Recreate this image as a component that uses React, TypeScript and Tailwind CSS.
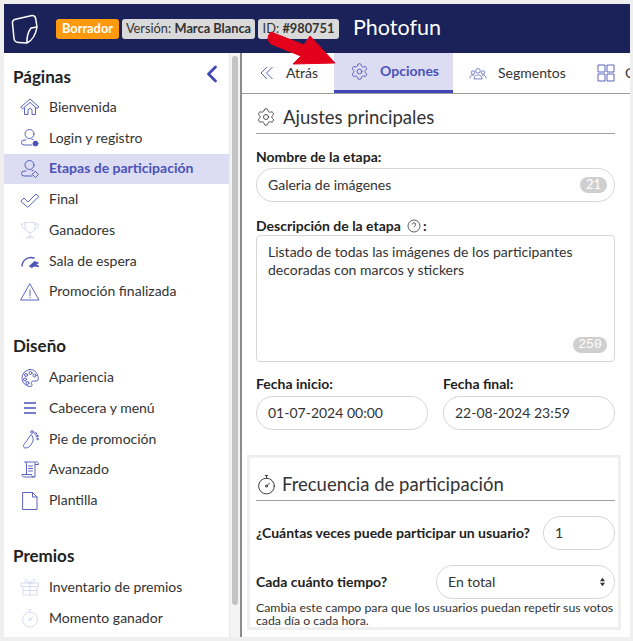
import React from 'react';
import { Settings } from 'lucide-react';

const stroke = '#4a52b8';

const Ico = ({ children, className = '', color = stroke }: { children: React.ReactNode; className?: string; color?: string }) => (
  <svg viewBox="0 0 20 20" fill="none" stroke={color} strokeWidth="0.9" strokeLinecap="round" strokeLinejoin="round" className={className}>
    {children}
  </svg>
);

const Stopwatch = ({ className = '', color = stroke }: { className?: string; color?: string }) => (
  <Ico className={className} color={color}>
    <circle cx="10" cy="11.500" r="7.500" />
    <path d="M8.800 1.500h2.400M10 1.500v2.500M10 11.500l2.800-2.800" />
    <circle cx="10" cy="11.500" r="1" />
  </Ico>
);

const items1: { label: string; icon: React.ReactNode; active?: boolean }[] = [
  { label: 'Bienvenida', icon: <Ico className="w-5 h-5"><path d="M1 10 10 2l9 8-2 1.500L10 5.500 3 11.500zM4.500 11v6.500h3.500v-4a2 2 0 0 1 4 0v4h3.500V11" /></Ico> },
  { label: 'Login y registro', icon: <Ico className="w-5 h-5"><circle cx="9.500" cy="6" r="4.500" /><path d="M12 17H4a2.500 2.500 0 0 1 0-5h2M13 11.500h-1" /><circle cx="15.500" cy="15.500" r="2.500" fill={stroke} /></Ico> },
  { label: 'Etapas de participación', active: true, icon: <Ico className="w-5 h-5"><circle cx="9.500" cy="6" r="4.500" /><path d="M12 17H4a2.500 2.500 0 0 1 0-5h2M13 11.500h-1" /><path d="M15.500 12.500l3 3-3 3-3-3z" /></Ico> },
  { label: 'Final', icon: <Ico className="w-5 h-5"><path d="M1 11l3-3 4 4 8-8 3 2.500L8 17z" /></Ico> },
  { label: 'Ganadores', icon: <Ico className="w-5 h-5" color="#d5d7ef"><path d="M5 2.500h10v5a5 5 0 0 1-10 0zM5 4H1.500c0 3 1.500 5 4 5.500M15 4h3.500c0 3-1.500 5-4 5.500M10 12.500v4M6 18h8M7.500 16.500h5" /></Ico> },
  { label: 'Sala de espera', icon: <Ico className="w-5 h-5"><path d="M2 15A9 9 0 0 1 14 7" strokeWidth="1.400" /><path d="M9.500 15l5-4.500 4 1.500-3 1 3.500 2.500-5-.5-2 1.500z" fill={stroke} /></Ico> },
  { label: 'Promoción finalizada', icon: <Ico className="w-5 h-5"><path d="M10 2 19 18H1zM10 8v5.500M10 15.200v.6" /></Ico> },
];

const items2: { label: string; icon: React.ReactNode }[] = [
  { label: 'Apariencia', icon: <Ico className="w-5 h-5"><path d="M10 1.500a8.500 8.500 0 1 0 1 17c1.500-.5 1-2 .5-3-.5-1.500.5-2.500 2-2.500h3.500c1.500-1 1.500-3 1-4.500C17 4 14 1.500 10 1.500z" /><circle cx="6" cy="7" r="1.500" /><circle cx="10.500" cy="5" r="1.500" /><circle cx="14.500" cy="7.500" r="1.500" /><circle cx="5" cy="11.500" r="1.500" /><circle cx="7.500" cy="15" r="1.500" /></Ico> },
  { label: 'Cabecera y menú', icon: <Ico className="w-5 h-5"><path d="M4 5h12M4 10h12M4 15h12" strokeWidth="1.700" strokeLinecap="butt" /></Ico> },
  { label: 'Pie de promoción', icon: <Ico className="w-5 h-5"><path d="M11 6c-2 1-3 5-6 8-2 2-2 5 .5 5 3 0 5-2 6.500-5 1.500-2.500 2-5-.5-8z" /><circle cx="12" cy="3" r="1.300" /><circle cx="15.500" cy="4.500" r="1" /><circle cx="17" cy="7" r="1" /><circle cx="17.500" cy="10" r=".8" /></Ico> },
  { label: 'Avanzado', icon: <Ico className="w-5 h-5"><path d="M5 2h11.500c1.500 0 2 1 2 2.500h-3M5 2c1 0 1.500.5 1.500 1.500V14M15 3v14H4.500C3 17 2 16 2 14.500h9.500c0 1.500 1 2.500 2 2.500M8.500 6h4M8.500 8.500h4M8.500 11h4" /></Ico> },
  { label: 'Plantilla', icon: <Ico className="w-5 h-5"><path d="M3 1.500h9.500L17 6v12.500H3zM12.500 1.500V6H17" /></Ico> },
];

const items3: { label: string; icon: React.ReactNode }[] = [
  { label: 'Inventario de premios', icon: <Ico className="w-5 h-5" color="#d5d7ef"><path d="M1.500 6h17v3.500h-17zM3 9.500V18h14V9.500M10 6v12M3 13.500h14M10 6C8 2 5 1.500 5 3.500S8 6 10 6zM10 6c2-4 5-4.500 5-2.500S12 6 10 6z" /></Ico> },
  { label: 'Momento ganador', icon: <Stopwatch className="w-5 h-5" color="#d5d7ef" /> },
];

const Row = ({ label, icon, active }: { label: string; icon: React.ReactNode; active?: boolean }) => (
  <div className={`flex items-center h-[30.75px] pl-4 ${active ? 'bg-[#dcdcf3]' : ''}`}>
    <span className="w-[29px] shrink-0">{icon}</span>
    <span className={`text-[14px] mb-[2px] ${active ? 'font-bold text-[#4a52b8]' : 'text-[#333]'}`}>{label}</span>
  </div>
);

const SectionTitle = ({ children }: { children: React.ReactNode }) => (
  <h3 className="text-[17px] font-bold text-[#222] leading-5 pl-[9px]">{children}</h3>
);

const Label = ({ children }: { children: React.ReactNode }) => (
  <label className="block text-[14px] font-bold text-[#222] leading-4">{children}</label>
);

const Pill = ({ children, className = '' }: { children: React.ReactNode; className?: string }) => (
  <div className={`h-[34px] rounded-full border border-[#d6d6d6] flex items-center pl-[11px] pr-3 pb-[2px] text-[14px] text-[#333] ${className}`}>{children}</div>
);

const Counter = ({ children, className = '' }: { children: React.ReactNode; className?: string }) => (
  <span className={`h-4 rounded-full bg-[#cfcfcf] text-white text-[13px] flex items-center justify-center ${className}`}>{children}</span>
);

export default function App() {
  return (
    <div className="relative w-[633px] h-[641px] overflow-hidden bg-[#efefef] pt-1 pl-1 pr-[3px] pb-[4px] font-['Lato',sans-serif]">
      <div className="h-full flex flex-col bg-white">
        {/* Top bar */}
        <header className="h-[49px] shrink-0 bg-[#1a2259] flex items-center pl-[6px]">
          <svg viewBox="0 0 30 30" fill="none" stroke="#fff" strokeWidth="1.500" strokeLinejoin="round" className="w-[30px] h-[30px] shrink-0">
            <path d="M2.500 9.500Q2 6 5.500 5.200L21 1.700Q25 1 25.700 4.500L27 13Q25 25 17 29L8.500 28.500Q4.500 28.300 4 24.500z" />
            <path d="M27 13 21 14Q16.500 20 17 29" />
          </svg>
          <div className="flex items-center gap-[3px] ml-4 text-[12.800px] leading-5">
            <span className="h-5 w-[63px] pb-[2px] flex items-center justify-center rounded-[3px] bg-[#ff9a0e] text-white font-bold">Borrador</span>
            <span className="h-5 w-[133px] pb-[2px] flex items-center justify-center rounded-[3px] bg-[#d9d9d9] text-[#333]">Versión:&nbsp;<b>Marca Blanca</b></span>
            <span className="h-5 w-[81px] pb-[2px] flex items-center justify-center rounded-[3px] bg-[#d9d9d9] text-[#333]">ID:&nbsp;<b>#980751</b></span>
          </div>
          <span className="ml-[14px] mb-[2px] text-[21.500px] text-white">Photofun</span>
        </header>

        <div className="flex-1 flex min-h-0">
          {/* Sidebar */}
          <aside className="w-[225px] shrink-0 overflow-hidden pt-[14px]">
            <div className="flex items-center justify-between pr-[11px]">
              <SectionTitle>Páginas</SectionTitle>
              <svg viewBox="0 0 12 18" fill="none" stroke="#3f48b5" strokeWidth="2.800" strokeLinecap="round" strokeLinejoin="round" className="w-3 h-[18px] -mt-[7px]"><path d="M9.500 2 2.500 9l7 7" /></svg>
            </div>
            <div className="mt-[5px]">{items1.map((i) => <Row key={i.label} {...i} />)}</div>
            <div className="mt-[29px]"><SectionTitle>Diseño</SectionTitle></div>
            <div className="mt-[6px]">{items2.map((i) => <Row key={i.label} {...i} />)}</div>
            <div className="mt-[30px]"><SectionTitle>Premios</SectionTitle></div>
            <div className="mt-[6px]">{items3.map((i) => <Row key={i.label} {...i} />)}</div>
          </aside>

          {/* Sidebar scrollbar */}
          <div className="w-[11px] shrink-0 bg-[#f4f4f4] border-l border-[#e8e8e8] pl-[2px] pt-[3px]">
            <div className="w-[6px] h-[549px] rounded-full bg-[#c4c4c4]" />
          </div>
          <div className="w-[2px] shrink-0 bg-[#8c8c8c]" />

          {/* Main panel */}
          <main className="flex-1 min-w-0 flex flex-col">
            <nav className="h-[41px] shrink-0 flex border-b border-[#9a9a9a] overflow-hidden text-[14px] text-[#333]">
              <div className="w-[92px] shrink-0 flex items-center pl-[18px]">
                <svg viewBox="0 0 14 14" fill="none" stroke="#4a52b8" strokeWidth="0.9" className="w-[14px] h-[14px] mr-[12px]"><path d="M7 1 1 7l6 6M12.500 1l-6 6 6 6" /></svg>
                <span className="mb-[2px]">Atrás</span>
              </div>
              <div className="w-[119px] shrink-0 flex items-center pl-4 bg-[#dcdcf3] border-b-[3px] border-[#3f48b5] font-bold text-[#4a52b8]">
                <Settings size={19} strokeWidth={1.100} color={stroke} className="mr-[11px]" />
                <span className="mb-[2px]">Opciones</span>
              </div>
              <div className="w-[134px] shrink-0 flex items-center pl-4 text-[#333]">
                <svg viewBox="0 0 20 14" fill="none" stroke="#4a52b8" strokeWidth="0.8" className="w-[18px] h-[13px] mr-[11px]"><circle cx="10" cy="4" r="2.500" /><circle cx="4.500" cy="6" r="2" /><circle cx="15.500" cy="6" r="2" /><path d="M5.500 13c0-6 9-6 9 0zM1 12.500c0-3 2-4.500 4.500-3.500M19 12.500c0-3-2-4.500-4.500-3.500" /></svg>
                <span className="mb-[2px]">Segmentos</span>
              </div>
              <div className="shrink-0 flex items-center pl-[10px]">
                <svg viewBox="0 0 18 18" fill="none" stroke="#4a52b8" strokeWidth="0.9" className="w-[18px] h-[18px] mr-[10px]"><path d="M1 1h7v7H1zM10 1h7v7h-7zM1 10h7v7H1zM10 10h7v7h-7z" /></svg>
                <span className="mb-[2px]">Contenido</span>
              </div>
            </nav>

            <div className="flex-1 min-h-0 overflow-hidden">
              <div className="pl-[14px] pr-[15px]">
                <h2 className="h-[39px] mt-[1px] flex items-end pb-[4px] border-b border-[#a0a0a0] text-[18.500px] leading-6 text-[#333]">
                  <Settings size={20} strokeWidth={1} color="#333" className="mr-[7px] mb-[2px]" />
                  Ajustes principales
                </h2>
                <div className="mt-[15px]"><Label>Nombre de la etapa:</Label></div>
                <Pill className="mt-[3px] justify-between pr-[7px]">
                  <span>Galeria de imágenes</span>
                  <Counter className="w-[27px] mt-[2px]">21</Counter>
                </Pill>
                <div className="mt-[16px]">
                  <Label>
                    <span className="inline-flex items-center">Descripción de la etapa
                      <svg viewBox="0 0 14 14" fill="none" stroke="#333" strokeWidth="0.8" className="w-[14px] h-[14px] ml-[6px] mr-[2px]"><circle cx="7" cy="7" r="6" /><path d="M5.300 5.500a1.700 1.700 0 1 1 2.500 1.500c-.6.4-.8.7-.8 1.300M7 10v.3" /></svg>
                      :</span>
                  </Label>
                </div>
                <div className="mt-[1px] h-[127px] rounded-[4px] border border-[#d6d6d6] px-[11px] pt-[7px] flex flex-col text-[14px] leading-[18px] text-[#333]">
                  <p className="flex-1">Listado de todas las imágenes de los participantes decoradas con marcos y stickers</p>
                  <div className="flex justify-end pb-2 -mr-[4px]">
                    <Counter className="w-[34px] text-[12px] font-['Liberation_Mono',monospace]">250</Counter>
                  </div>
                </div>
                <div className="mt-[14px] flex gap-[15px]">
                  <div className="flex-1">
                    <Label>Fecha inicio:</Label>
                    <Pill className="mt-[4px]">01-07-2024 00:00</Pill>
                  </div>
                  <div className="flex-1">
                    <Label>Fecha final:</Label>
                    <Pill className="mt-[4px]">22-08-2024 23:59</Pill>
                  </div>
                </div>
              </div>

              {/* Frequency panel */}
              <section className="mt-[25px] ml-[5px] mr-[9px] border-[3px] border-[#efefef] pl-[6px] pr-[3px]">
                <h2 className="h-[43px] flex items-end pb-[4px] border-b border-[#a0a0a0] text-[18.500px] leading-6 text-[#333]">
                  <span className="mr-[5px] mb-[1px]"><Stopwatch className="w-[21px] h-[21px]" color="#333" /></span>
                  Frecuencia de participación
                </h2>
                <div className="mt-[15px] flex items-center justify-between">
                  <Label>¿Cuántas veces puede participar un usuario?</Label>
                  <Pill className="w-[72px]">1</Pill>
                </div>
                <div className="mt-[15px] flex items-center justify-between">
                  <Label>Cada cuánto tiempo?</Label>
                  <Pill className="w-[179px] justify-between pl-[10px] pr-[8px]">
                    <span>En total</span>
                    <svg viewBox="0 0 8 12" fill="#333" className="w-[7px] h-[10px] mt-[2px]"><path d="M4 1l3 4H1zM4 11 1 7h6z" /></svg>
                  </Pill>
                </div>
                <p className="mt-[2px] text-[12.300px] leading-[13px] text-[#333]">Cambia este campo para que los usuarios puedan repetir sus votos cada día o cada hora.</p>
              </section>
            </div>
          </main>
        </div>
      </div>

      {/* Red arrow annotation */}
      <svg viewBox="0 0 100 60" className="absolute left-[260px] top-[25px] w-[100px] h-[60px]">
        <path d="M11 7 44 20 50 11 75 38 33 39 41 31 11 19Q5 13 11 7z" fill="#e3001b" stroke="#e3001b" strokeWidth="1" strokeLinejoin="round" />
      </svg>
    </div>
  );
}
